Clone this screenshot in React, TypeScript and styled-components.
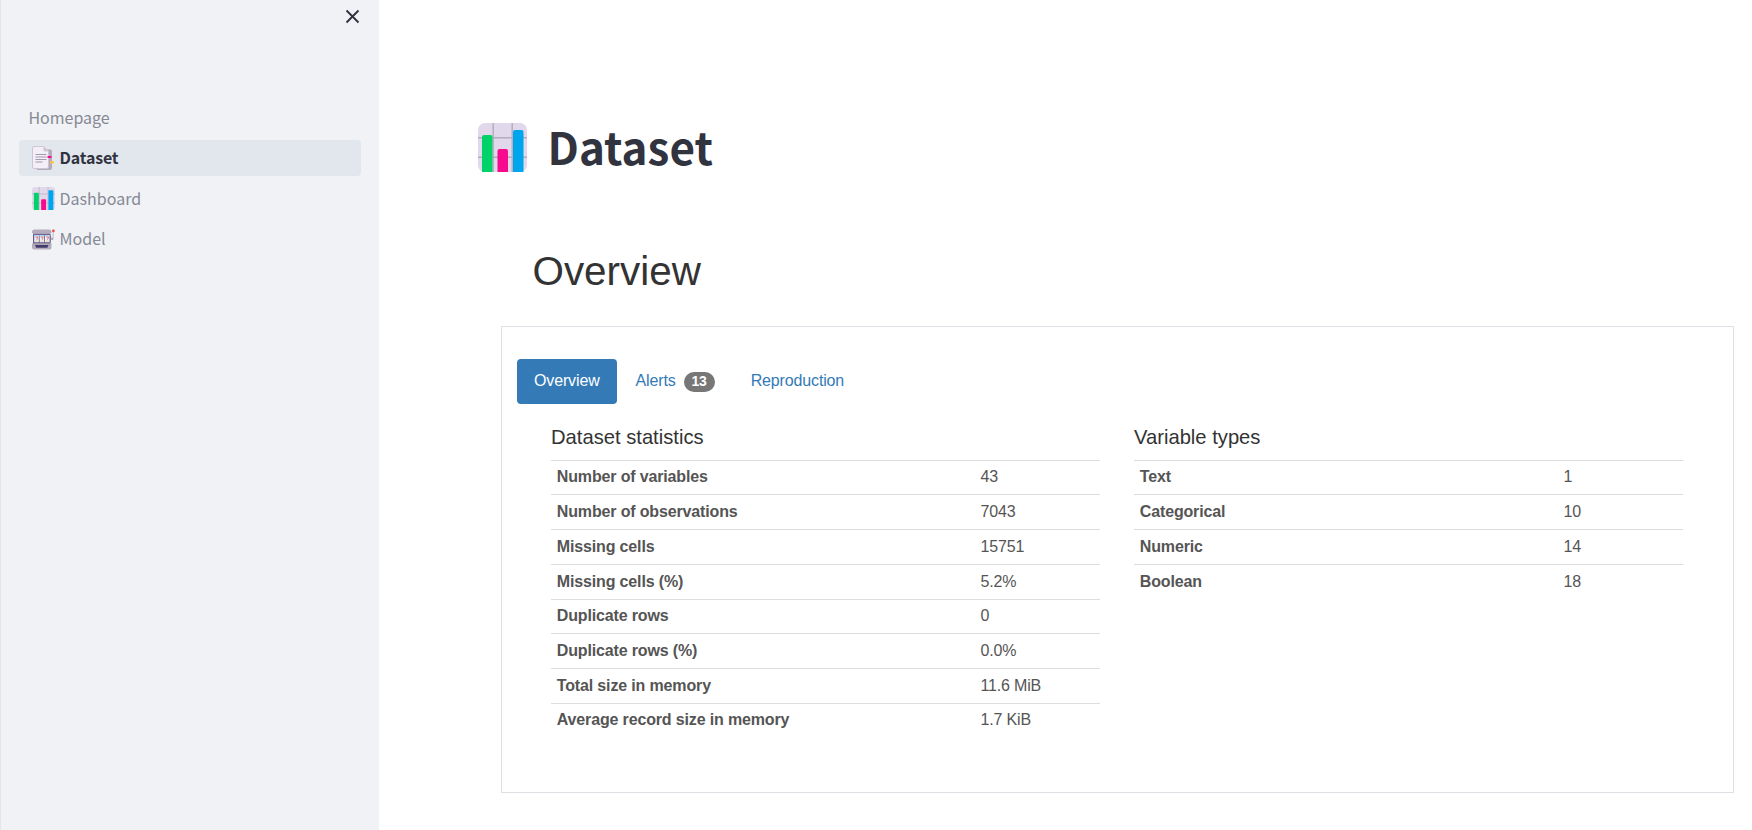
import React from "react";
import styled, { createGlobalStyle } from "styled-components";

const sourceSans = `"Source Sans Pro", "Noto Sans CJK SC", sans-serif`;
const arial = `"Liberation Sans", Arial, sans-serif`;

const GlobalStyle = createGlobalStyle`
  * { box-sizing: border-box; }
  body { margin: 0; background: #fff; overflow: hidden; }
`;

const Page = styled.div`
  display: flex;
  height: 830px;
  width: 1752px;
`;

const Sidebar = styled.aside`
  width: 379px;
  flex: none;
  background: #f0f2f6;
  border-left: 1px solid #e4e5e7;
`;

const SidebarHeader = styled.div`
  display: flex;
  justify-content: flex-end;
  padding: 8.5px 19.5px 0 0;
  height: 100px;
`;

const CloseButton = styled.button`
  width: 15px;
  height: 15px;
  padding: 0;
  border: 0;
  background: none;
  display: block;
`;

const NavList = styled.nav`
  display: flex;
  flex-direction: column;
  gap: 4.4px;
  padding: 0 18px;
`;

const NavItem = styled.a<{ $active?: boolean; $plain?: boolean }>`
  display: flex;
  align-items: center;
  gap: ${(p) => (p.$active ? 5.6 : 4.6)}px;
  height: 36px;
  padding-left: ${(p) => (p.$plain ? 9.4 : 13)}px;
  border-radius: 4px;
  background: ${(p) => (p.$active ? "#e2e7ee" : "transparent")};
  color: ${(p) => (p.$active ? "#31333f" : "#868994")};
  font: ${(p) => (p.$active ? 700 : 400)} 16px/34px ${sourceSans};
  letter-spacing: ${(p) => (p.$active ? "-0.2px" : "0")};
  white-space: nowrap;

  svg { flex: none; }
`;

const NavLabel = styled.span`
  height: 36px;
`;

const Main = styled.main`
  flex: 1;
  display: flex;
  flex-direction: column;
  padding: 120px 18px 0 99px;
`;

const PageTitle = styled.h1`
  display: flex;
  align-items: center;
  gap: 20.5px;
  height: 55px;
  margin: 0;
  color: #31333f;
  font: 700 44px/53px ${sourceSans};
`;

const TitleText = styled.span`
  padding-bottom: 2px;
`;

const SectionTitle = styled.h1`
  margin: 70px 0 0 54.5px;
  height: 52px;
  color: #333;
  font: 400 40.4px/52px ${arial};
`;

const Panel = styled.section`
  margin: 29px 0 0 23px;
  height: 467px;
  border: 1px solid #dfe0e6;
  padding: 32px 15px;
`;

const Tabs = styled.div`
  display: flex;
  gap: 2px;
`;

const Tab = styled.a<{ $active?: boolean }>`
  display: flex;
  align-items: flex-start;
  height: 45px;
  padding: 0 17px;
  border-radius: 4px;
  background: ${(p) => (p.$active ? "#337ab7" : "transparent")};
  color: ${(p) => (p.$active ? "#fff" : "#337ab7")};
  font: 400 16px/43px ${arial};
  letter-spacing: -0.14px;
`;

const Badge = styled.span`
  margin: 13px 0 0 8px;
  width: 31px;
  height: 20px;
  border-radius: 10px;
  background: #777;
  color: #fff;
  font: 700 14px/19px ${arial};
  text-align: center;
`;

const Columns = styled.div`
  display: flex;
  gap: 34px;
  padding: 17px 0 0 34px;
`;

const Column = styled.div`
  width: 549px;
`;

const TableTitle = styled.p`
  margin: 0;
  height: 38.7px;
  color: #333;
  font: 400 20.2px/32px ${arial};
`;

const Table = styled.div`
  display: flex;
  flex-direction: column;
`;

const Row = styled.div`
  display: grid;
  grid-template-columns: 423.6px 1fr;
  height: 34.72px;
  border-top: 1px solid #ddd;
  padding: 0.78px 0 0 5.8px;
  color: #555;
  font: 400 16px/32px ${arial};
  letter-spacing: -0.15px;

  strong { font-weight: 700; }
`;

function CloseIcon() {
  return (
    <svg width="15" height="15" viewBox="0 0 15 15" fill="none" stroke="#31333f" strokeWidth="1.9">
      <path d="M1.5 1.5 13.5 13.5M13.5 1.5 1.5 13.5" />
    </svg>
  );
}

function ChartIcon({ size }: { size: number }) {
  return (
    <svg width={size} height={size} viewBox="0 0 49 49">
      <rect width="49" height="49" rx="7" fill="#e1d8ec" />
      <path d="M15.2 0V49M34.2 0V49M0 14.8H49M0 34.2H49" stroke="#b4acbc" strokeWidth="1.4" />
      <path d="M4 49V14a2 2 0 0 1 2-2h6.5a2 2 0 0 1 2 2v35z" fill="#00d26a" />
      <path d="M19.5 49V28a2 2 0 0 1 2-2H28a2 2 0 0 1 2 2v21z" fill="#f70a8d" />
      <path d="M35 49V9a2 2 0 0 1 2-2h6.5a2 2 0 0 1 2 2v40z" fill="#00a6ed" />
    </svg>
  );
}

function BookmarkTabsIcon() {
  return (
    <svg width="22" height="24" viewBox="0 0 22 24">
      <path d="M4 3.5h14.5q1.5 0 1.5 1.5V22q0 2-2 2H6q-2 0-2-2z" fill="#b4acbc" />
      <path d="M.5 2Q.5.5 2 .5h9.500l5 5V21q0 1.5-1.5 1.5H2Q.5 22.5.5 21z" fill="#f3eef8" stroke="#cdc4d6" />
      <path d="M11.5 .5v3.5q0 1.5 1.5 1.5h3.5z" fill="#cdc4d6" />
      <path d="M3.5 8.5h11M3.5 11h11M3.5 13.5h11M3.5 16h7" stroke="#998ea4" strokeWidth=".9" />
      <rect x="15.5" y="10" width="4" height="2" rx=".5" fill="#f70a8d" />
      <rect x="18" y="15.3" width="4" height="2.2" rx=".5" fill="#fcc238" />
    </svg>
  );
}

function SlotMachineIcon() {
  return (
    <svg width="23" height="21" viewBox="0 0 23 21">
      <path d="M19 8.5h1.7V2h.8v7.5q0 1.5-1 1.5H19z" fill="#b4acbc" />
      <circle cx="21.4" cy="1.8" r="1.4" fill="#f14a46" />
      <path d="M2.5 .5H17q2.5 0 2.5 2.5v1H0V3Q0 .5 2.5.5z" fill="#b4acbc" />
      <path d="M0 14.5h19.5v4q0 2-2 2H2q-2 0-2-2z" fill="#b4acbc" />
      <path d="M1 4.2h17.5v11H1z" fill="#998ea4" />
      <rect x="1" y="5.2" width="17.7" height="8.8" rx=".8" fill="#62598c" />
      <path d="M2.2 6h4.6v7.2H2.2zM7.6 6h4.6v7.2H7.6zM13 6h4.6v7.2H13z" fill="#e9f1fb" />
      <path d="M2.2 6h4.6v1.3H2.2zM7.6 6h4.6v1.3H7.6zM13 6h4.6v1.3H13z" fill="#a8d8f4" />
      <path d="M3.3 8h2.5L4.7 10.8M8.7 8h2.5L10.1 10.8M14.1 8h2.5L15.5 10.8" stroke="#f4645f" strokeWidth=".9" fill="none" />
      <path d="M3.2 12h2.6M8.6 12h2.6M14 12h2.6" stroke="#fbd08a" strokeWidth="1.2" />
      <path d="M3 16h13.5l-1.2 2.7H4.2z" fill="#433b6b" />
    </svg>
  );
}

const statistics = [
  ["Number of variables", "43"],
  ["Number of observations", "7043"],
  ["Missing cells", "15751"],
  ["Missing cells (%)", "5.2%"],
  ["Duplicate rows", "0"],
  ["Duplicate rows (%)", "0.0%"],
  ["Total size in memory", "11.6 MiB"],
  ["Average record size in memory", "1.7 KiB"],
];

const variableTypes = [
  ["Text", "1"],
  ["Categorical", "10"],
  ["Numeric", "14"],
  ["Boolean", "18"],
];

function StatTable({ title, rows }: { title: string; rows: string[][] }) {
  return (
    <Column>
      <TableTitle>{title}</TableTitle>
      <Table>
        {rows.map(([label, value]) => (
          <Row key={label}>
            <strong>{label}</strong>
            <span>{value}</span>
          </Row>
        ))}
      </Table>
    </Column>
  );
}

export default function App() {
  return (
    <Page>
      <GlobalStyle />
      <Sidebar>
        <SidebarHeader>
          <CloseButton aria-label="Close sidebar"><CloseIcon /></CloseButton>
        </SidebarHeader>
        <NavList>
          <NavItem $plain><NavLabel>Homepage</NavLabel></NavItem>
          <NavItem $active><BookmarkTabsIcon /><NavLabel>Dataset</NavLabel></NavItem>
          <NavItem><ChartIcon size={23} /><NavLabel>Dashboard</NavLabel></NavItem>
          <NavItem><SlotMachineIcon /><NavLabel>Model</NavLabel></NavItem>
        </NavList>
      </Sidebar>
      <Main>
        <PageTitle><ChartIcon size={49} /><TitleText>Dataset</TitleText></PageTitle>
        <SectionTitle>Overview</SectionTitle>
        <Panel>
          <Tabs>
            <Tab $active>Overview</Tab>
            <Tab>Alerts<Badge>13</Badge></Tab>
            <Tab>Reproduction</Tab>
          </Tabs>
          <Columns>
            <StatTable title="Dataset statistics" rows={statistics} />
            <StatTable title="Variable types" rows={variableTypes} />
          </Columns>
        </Panel>
      </Main>
    </Page>
  );
}
